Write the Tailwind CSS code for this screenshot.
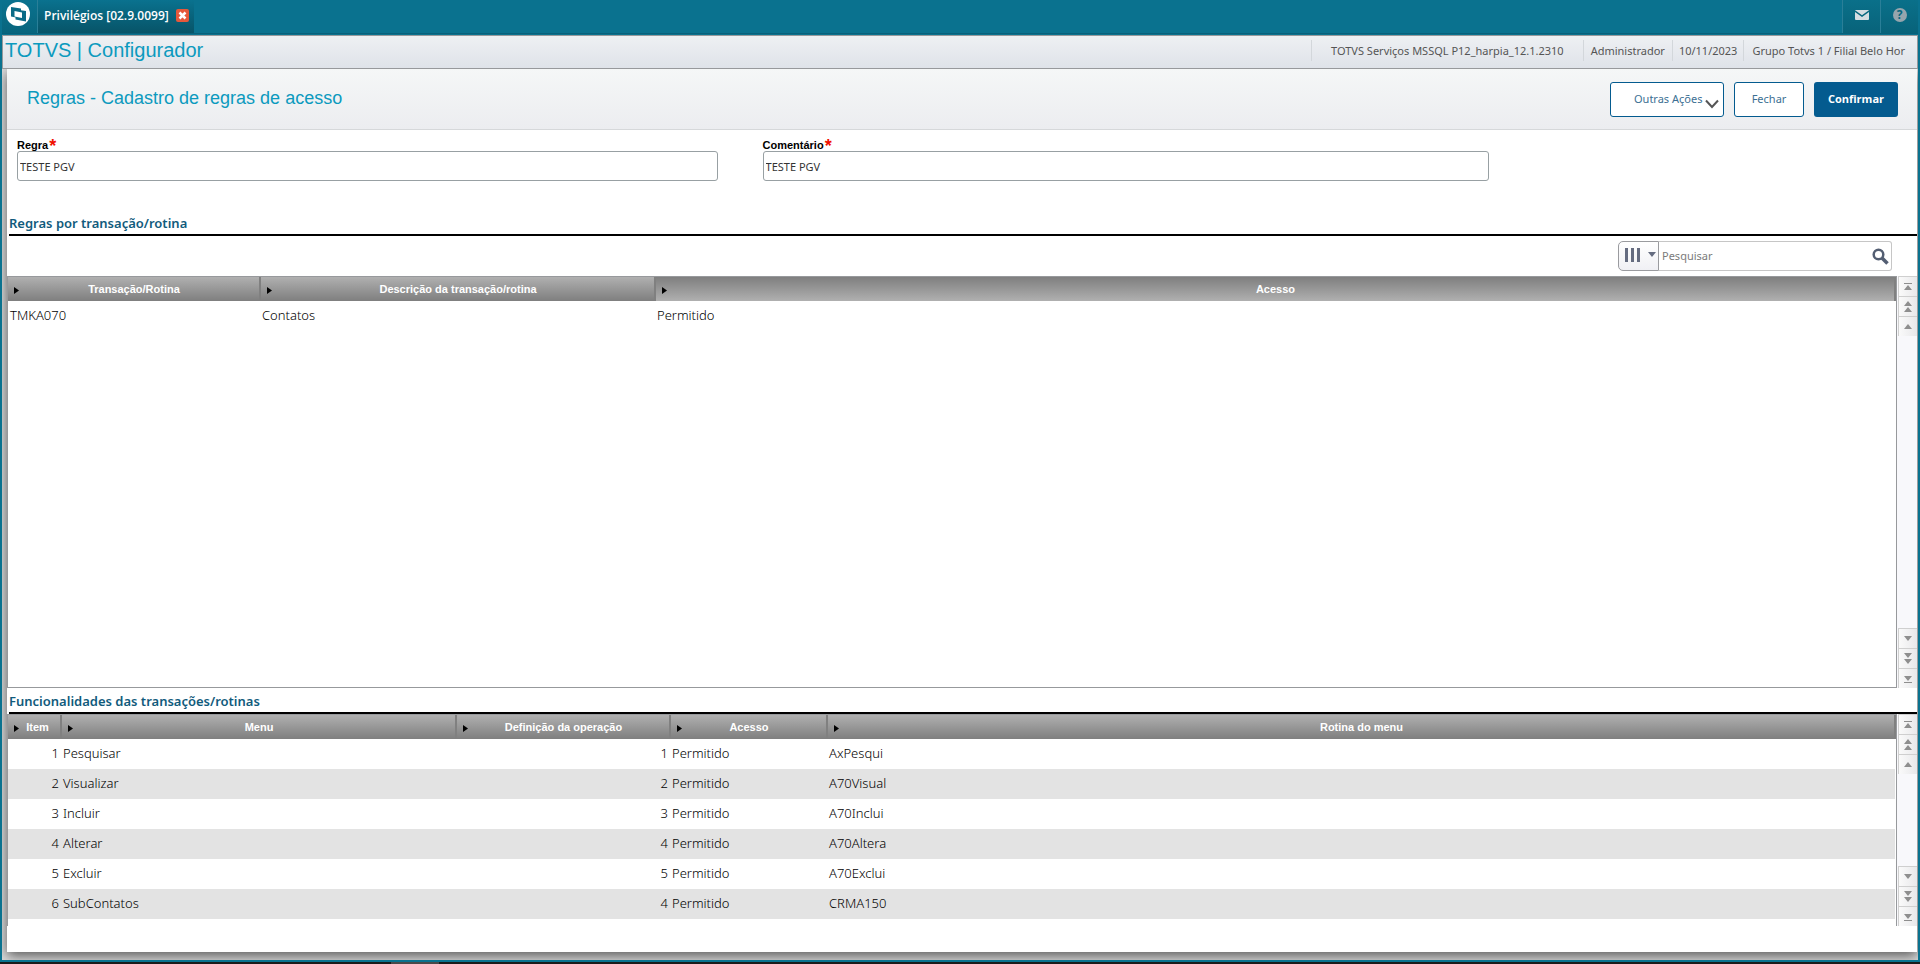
<!DOCTYPE html>
<html lang="pt-br">
<head>
  <meta charset="UTF-8" />
  <meta name="viewport" content="width=device-width, initial-scale=1.0" />
  <title>TOTVS | Configurador</title>
  <script src="https://cdn.jsdelivr.net/npm/@tailwindcss/browser@4"></script>
</head>
<body class="flex flex-col min-h-screen bg-[#1b1b1b] font-['Noto_Sans','Open_Sans',sans-serif] text-xs text-black">

  <!-- Janela -->
  <div class="flex flex-col flex-1 border-x-2 border-b-2 border-[#0a728f] bg-[#0a728f]">

    <!-- Barra superior -->
    <nav class="flex h-[34px] shrink-0 border-b border-[#08607a]">
      <button class="w-9 flex pt-[2px] pl-1 border-r border-[#2a7f98] bg-linear-to-b from-[#0a728f] to-[#08657d]" aria-label="Início">
        <svg class="w-6 h-6" viewBox="0 0 24 24">
          <circle cx="12" cy="12" r="12" fill="#fff" />
          <path d="M5 5l10 1.500v10L5 14.500z" fill="#0a6b87" />
          <path d="M9.500 7.500l10.500 1.500v10.500l-10.500-2z" fill="#0a6b87" />
          <path d="M8.500 9l7.500 1.500v5.500l-7.500-1.500z" fill="#fff" />
        </svg>
      </button>
      <div class="flex items-center gap-[7px] pl-[6px] pr-[5px] pb-[2px] bg-linear-to-b from-[#0a728f] to-[#075468] text-white">
        <a href="#" class="font-['Open_Sans',sans-serif] font-semibold">Privilégios [02.9.0099]</a>
        <button aria-label="Fechar aba">
          <svg class="w-[13px] h-[13px]" viewBox="0 0 13 13">
            <rect width="13" height="13" rx="2" fill="#e5583b" />
            <path d="M3.500 3.500l6 6M9.500 3.500l-6 6" stroke="#fff" stroke-width="2.500" />
          </svg>
        </button>
      </div>
      <div class="flex ml-auto">
        <button class="w-[38px] flex items-center justify-center pb-1 border-l border-[#2a7f98] bg-linear-to-b from-[#0a708a] to-[#08637a]" aria-label="Mensagens">
          <svg class="w-[14px] h-[10px]" viewBox="0 0 14 10">
            <rect width="14" height="10" rx="1" fill="#d5dde2" />
            <path d="M0 1l7 5 7-5" fill="none" stroke="#08687f" stroke-width="1.500" />
          </svg>
        </button>
        <button class="w-[38px] flex items-center justify-center pb-1 border-l border-[#2a7f98] bg-linear-to-b from-[#0a708a] to-[#08637a]" aria-label="Ajuda">
          <span class="w-[14px] h-[14px] rounded-full bg-[#96a5ad] text-[#08687f] text-xs leading-[14px] font-bold">?</span>
        </button>
      </div>
    </nav>

    <!-- Cabeçalho do módulo -->
    <header class="flex justify-between h-[34px] shrink-0 mt-px border border-[#97999c] bg-linear-to-b from-[#eef0f3] to-[#dfe3e9]">
      <h1 class="pl-[2px] font-['Liberation_Sans',sans-serif] text-xl leading-7 text-[#0c9abe]">TOTVS | Configurador</h1>
      <ul class="flex h-[21px] mt-1 text-[11px] leading-[21px] text-[#555]">
        <li class="px-[19px] border-l border-[#d3d7db]">TOTVS Serviços MSSQL P12_harpia_12.1.2310</li>
        <li class="px-[7px] border-l border-[#d3d7db]">Administrador</li>
        <li class="px-[6px] border-l border-[#d3d7db]">10/11/2023</li>
        <li class="pl-2 pr-3 border-l border-[#d3d7db]">Grupo Totvs 1 / Filial Belo Hor</li>
      </ul>
    </header>

    <!-- Área de trabalho -->
    <div class="flex flex-col flex-1 pl-[5px] pr-px pb-2 overflow-hidden bg-[#dcdcdc]">
      <main class="flex flex-col flex-1 bg-white shadow-[0_4px_12px_rgba(0,0,0,0.6)]">
        <div class="flex justify-between h-[61px] shrink-0 border-b border-[#d6d8da] bg-linear-to-b from-[#f5f7f7] to-[#ecedf0]">
          <h2 class="pl-5 font-['Liberation_Sans',sans-serif] text-lg leading-[58px] text-[#0c9abe]">Regras - Cadastro de regras de acesso</h2>
          <div class="flex gap-[10px] pt-[13px] pr-[19px] text-[11px] text-[#3c6f93]">
            <button class="flex items-center w-[114px] h-[35px] pl-[23px] gap-[3px] rounded-[3px] border border-[#045b8f] bg-white">
              Outras Ações
              <svg class="w-[14px] h-[10px] mt-2 shrink-0" viewBox="0 0 14 10"><path d="M1 1.500l6 6.500 6-6.500" fill="none" stroke="#555" stroke-width="2" /></svg>
            </button>
            <button class="w-[70px] h-[35px] rounded-[3px] border border-[#045b8f] bg-white">Fechar</button>
            <button class="w-[84px] h-[35px] rounded-[3px] bg-[#045b8f] font-['Open_Sans',sans-serif] font-bold text-white">Confirmar</button>
          </div>
        </div>

        <!-- Formulário -->
        <form class="flex gap-[45px] pt-2 pl-[10px] pr-[428px]">
          <div class="flex-[27]">
            <label for="regra" class="flex gap-px h-[13px] font-['Liberation_Sans',sans-serif] text-[11px] leading-[15px] font-bold">Regra<span class="text-lg leading-4 text-[#f01000]">*</span></label>
            <input id="regra" type="text" value="TESTE PGV" class="w-full h-[30px] px-[2px] rounded-[3px] border border-[#98a0a3] text-[11px] text-[#333]" />
          </div>
          <div class="flex-[28]">
            <label for="comentario" class="flex gap-px h-[13px] font-['Liberation_Sans',sans-serif] text-[11px] leading-[15px] font-bold">Comentário<span class="text-lg leading-4 text-[#f01000]">*</span></label>
            <input id="comentario" type="text" value="TESTE PGV" class="w-full h-[30px] px-[2px] rounded-[3px] border border-[#98a0a3] text-[11px] text-[#333]" />
          </div>
        </form>

        <!-- Regras por transação/rotina -->
        <h3 class="mt-[33px] ml-[2px] h-[22px] border-b-2 border-black text-[13px] leading-[18px] font-semibold text-[#115b7c]">Regras por transação/rotina</h3>
        <div class="flex justify-end h-10 pt-[5px] pr-[25px]">
          <button class="w-[41px] h-[30px] pb-[3px] pl-[6px] rounded-l-[5px] border border-[#9a9b9f] bg-linear-to-b from-white to-[#f0f0f4]" aria-label="Colunas">
            <svg class="w-[31px] h-[14px]" viewBox="0 0 31 14"><path d="M0 0h3v14H0zM6 0h3v14H6zM12 0h3v14h-3zM23 4h8l-4 5z" fill="#656c80" /></svg>
          </button>
          <div class="flex items-center w-[233px] h-[30px] pl-[3px] pr-[2px] rounded-r-[3px] border border-l-0 border-[#c6c6c6]">
            <input type="text" placeholder="Pesquisar" aria-label="Pesquisar" class="flex-1 min-w-0 text-[11px] placeholder:text-[#7b7b7b]" />
            <button aria-label="Buscar"><svg class="w-[17px] h-[17px]" viewBox="0 0 17 17"><circle cx="6.500" cy="6.500" r="4.800" fill="none" stroke="#535e72" stroke-width="2.500" /><path d="M10 10l5.500 5.500" stroke="#535e72" stroke-width="3.500" /></svg></button>
          </div>
        </div>
        <div class="flex flex-1 min-h-[412px]">
          <div class="flex-1 border border-[#97999c]">
            <table class="w-full table-fixed">
              <thead id="cab-regras" class="font-['Liberation_Sans',sans-serif] text-[11px] text-white"></thead>
              <tbody id="linhas-regras" class="text-[13px] font-light"></tbody>
            </table>
          </div>
          <div class="rolagem flex flex-col justify-between w-5 pl-px bg-[#f8f8fb]"></div>
        </div>

        <!-- Funcionalidades -->
        <h3 class="mt-[3px] ml-[2px] h-[23px] shrink-0 border-b-2 border-black text-[13px] leading-[20px] font-semibold text-[#115b7c]">Funcionalidades das transações/rotinas</h3>
        <div class="flex h-[212px] mb-[26px]">
          <div class="flex-1 border border-b-0 border-[#97999c]">
            <table class="w-full table-fixed">
              <thead id="cab-funcoes" class="font-['Liberation_Sans',sans-serif] text-[11px] text-white"></thead>
              <tbody id="linhas-funcoes" class="text-[13px] font-light"></tbody>
            </table>
          </div>
          <div class="rolagem flex flex-col justify-between w-5 pl-px bg-[#f8f8fb]"></div>
        </div>
      </main>
    </div>
  </div>

  <!-- Borda da barra de tarefas -->
  <footer class="h-[2px] pl-[391px]"><div class="w-12 h-full bg-[#4a4a4a]"></div></footer>

  <script>
    const regras = {
      colunas: [
        { nome: 'Transação/Rotina', classe: 'w-[252px]' },
        { nome: 'Descrição da transação/rotina', classe: 'w-[395px]' },
        { nome: 'Acesso', classe: '', ativa: true }
      ],
      linhas: [['TMKA070', 'Contatos', 'Permitido']]
    };

    const funcoes = {
      colunas: [
        { nome: 'Item', classe: 'w-[53px]', numero: true },
        { nome: 'Menu', classe: 'w-[395px]' },
        { nome: 'Definição da operação', classe: 'w-[214px]', numero: true },
        { nome: 'Acesso', classe: 'w-[157px]' },
        { nome: 'Rotina do menu', classe: '' }
      ],
      linhas: [
        [1, 'Pesquisar', 1, 'Permitido', 'AxPesqui'],
        [2, 'Visualizar', 2, 'Permitido', 'A70Visual'],
        [3, 'Incluir', 3, 'Permitido', 'A70Inclui'],
        [4, 'Alterar', 4, 'Permitido', 'A70Altera'],
        [5, 'Excluir', 5, 'Permitido', 'A70Exclui'],
        [6, 'SubContatos', 4, 'Permitido', 'CRMA150']
      ]
    };

    function montarTabela(id, { colunas, linhas }) {
      document.getElementById('cab-' + id).innerHTML = '<tr>' + colunas.map(c => `
        <th class="h-6 p-0 border-r-2 border-[#808080] ${c.ativa ? 'bg-linear-to-t' : 'bg-linear-to-b'} from-[#b0b0b0] to-[#7f7f7f] ${c.classe}">
          <div class="flex items-center pl-[6px] ${c.nome === 'Item' ? 'pr-1' : 'pr-[10px]'}">
            <svg class="w-[5px] h-[7px] mt-[2px] shrink-0" viewBox="0 0 5 7"><path d="M0 0l5 3.500L0 7z" fill="#000" /></svg>
            <span class="flex-1">${c.nome}</span>
          </div>
        </th>`).join('') + '</tr>';
      document.getElementById('linhas-' + id).innerHTML = linhas.map(l => `
        <tr class="h-[30px] even:bg-[#e3e3e3]">
          ${l.map((v, i) => `<td class="px-[2px] ${colunas[i].numero ? 'text-right' : 'text-left'}">${v}</td>`).join('')}
        </tr>`).join('');
    }

    // Botões da barra de rolagem: início, página e linha
    const botoes = [
      ['Início', 'M1 3h8v1H1zM5 5l4 5H1z'],
      ['Página acima', 'M5 1l4 5H1zM5 7l4 5H1z'],
      ['Linha acima', 'M5 4l4 5H1z'],
      ['Linha abaixo', 'M5 9l4-5H1z'],
      ['Página abaixo', 'M5 6l4-5H1zM5 12l4-5H1z'],
      ['Fim', 'M1 10h8v1H1zM5 9l4-5H1z']
    ].map(([nome, d]) => `
      <button aria-label="${nome}" class="flex items-center justify-center w-[19px] h-5 border-t border-l border-[#cfcfcf] bg-linear-to-r from-[#fafafa] to-[#e8e8ea]">
        <svg class="w-[10px] h-[13px]" viewBox="0 0 10 13"><path d="${d}" fill="#8e8e8e" /></svg>
      </button>`);

    document.querySelectorAll('.rolagem').forEach(barra => {
      barra.innerHTML = `<div>${botoes.slice(0, 3).join('')}</div><div>${botoes.slice(3).join('')}</div>`;
    });

    montarTabela('regras', regras);
    montarTabela('funcoes', funcoes);
  </script>
</body>
</html>
